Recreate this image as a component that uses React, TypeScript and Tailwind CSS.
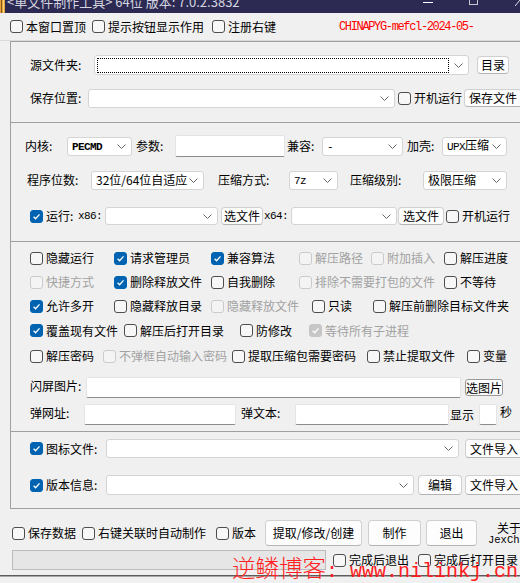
import React from "react";

type CheckProps = {
  label: React.ReactNode;
  on?: boolean;
  dis?: boolean;
  w?: string;
};

function Box({ on, dis }: { on?: boolean; dis?: boolean }) {
  const tone = on
    ? dis
      ? "border-[#c6c6c6] bg-[#c6c6c6]"
      : "border-[#0063b1] bg-[#0063b1]"
    : dis
      ? "border-[#cbcbcb] bg-[#f4f4f4]"
      : "border-[#4d4d4d] bg-[#f7f7f7]";
  return (
    <span
      className={`flex h-[13px] w-[13px] shrink-0 items-center justify-center rounded-[3px] border ${tone}`}
    >
      {on && (
        <svg width="9" height="9" viewBox="0 0 9 9">
          <path d="M1.6 4.7 L3.6 6.7 L7.5 2.4" fill="none" stroke="white" strokeWidth="1.3" />
        </svg>
      )}
    </span>
  );
}

function Check({ label, on, dis, w = "" }: CheckProps) {
  return (
    <div className={`flex shrink-0 items-center whitespace-nowrap ${w}`}>
      <Box on={on} dis={dis} />
      <span className={`ml-[3px] ${dis ? "text-[#a2a2a2]" : "text-black"}`}>{label}</span>
    </div>
  );
}

function Chevron() {
  return (
    <svg width="9" height="5" viewBox="0 0 9 5" className="shrink-0">
      <path d="M0.5 0.5 L4.5 4.5 L8.5 0.5" fill="none" stroke="#666" strokeWidth="1" />
    </svg>
  );
}

function Select({ w, h, children }: { w: string; h: string; children?: React.ReactNode }) {
  return (
    <div
      className={`flex shrink-0 items-center justify-between rounded-[3px] border border-[#d4d4d4] bg-white pl-[4px] pr-[5px] whitespace-nowrap ${w} ${h}`}
    >
      <span>{children}</span>
      <Chevron />
    </div>
  );
}

function Field({ w, h }: { w: string; h: string }) {
  return (
    <div
      className={`shrink-0 rounded-[2px] border border-[#e4e4e4] border-b-[#8c8c8c] bg-white ${w} ${h}`}
    />
  );
}

function Btn({ w, h, children }: { w: string; h: string; children: React.ReactNode }) {
  return (
    <div
      className={`flex shrink-0 items-center justify-center whitespace-nowrap rounded-[4px] border border-[#d0d0d0] border-b-[#b4b4b4] bg-[#fdfdfd] ${w} ${h}`}
    >
      {children}
    </div>
  );
}

const mono = "font-['Liberation_Mono',monospace] text-[11px] tracking-[-0.6px]";

export default function App() {
  return (
    <div className="relative h-[583px] w-[520px] overflow-hidden bg-[#f0f0f0] font-['Noto_Sans_CJK_SC','Noto_Sans',sans-serif] text-[12px] leading-[16px] text-black">
      {/* title bar, mostly cut off */}
      <div className="flex h-[13px] items-start overflow-hidden bg-[#2c2a52]">
        <svg width="5" height="13" viewBox="0 0 5 13" className="shrink-0">
          <rect x="0" y="0" width="5" height="13" fill="#e6a23a" />
          <rect x="1" y="0" width="1" height="13" fill="#8a5a1a" />
          <rect x="3" y="0" width="1" height="13" fill="#f7d77a" />
        </svg>
        <div className="w-[418px] shrink-0 pl-[2px]">
          <span className="block -translate-y-[6px] whitespace-nowrap text-[13px] leading-[16px] text-[#d6d6e0]">
            &lt;单文件制作工具&gt; 64位 版本: 7.0.2.3832
          </span>
        </div>
        <div className="mt-[2px] h-px w-[10px] shrink-0 bg-white" />
        <div className="w-[36px] shrink-0" />
        <div className="h-[5px] w-[9px] shrink-0 border-x border-b border-[#c8c8d0]" />
        <div className="w-[37px] shrink-0" />
        <svg width="5" height="6" viewBox="0 0 5 6" className="shrink-0">
          <path d="M0 6 L5 0" stroke="#e0e0e8" strokeWidth="1" />
        </svg>
      </div>

      {/* top options */}
      <div className="flex h-[27px] items-center pl-[10px]">
        <Check w="w-[82px]" label="本窗口置顶" />
        <Check w="w-[120px]" label="提示按钮显示作用" />
        <Check w="w-[127px]" label="注册右键" />
        <span className="font-['Liberation_Mono',monospace] text-[12px] tracking-[-1.35px] text-[#ff0000]">
          CHINAPYG-mefcl-2024-05-
        </span>
      </div>
      <div className="h-px bg-[#dadada]" />

      {/* main frame */}
      <div className="ml-[10px] w-[520px] border-y border-l border-[#a0a0a0]">
        {/* section 1 */}
        <div className="flex h-[80px] flex-col gap-[13px] pl-[19px] pt-[13px]">
          <div className="flex h-[20px] items-center">
            <span className="w-[64px] shrink-0">源文件夹:</span>
            <div className="flex h-[20px] w-[375px] shrink-0 items-center justify-between rounded-[3px] border border-[#d4d4d4] bg-white pr-[5px]">
              <div className="ml-[2px] h-[15px] w-[352px] border border-dotted border-black" />
              <Chevron />
            </div>
            <div className="ml-[8px]">
              <Btn w="w-[32px]" h="h-[18px]">目录</Btn>
            </div>
          </div>
          <div className="flex h-[20px] items-center">
            <span className="w-[58px] shrink-0">保存位置:</span>
            <Select w="w-[307px]" h="h-[19px]" />
            <div className="ml-[3px]">
              <Check w="w-[66px]" label="开机运行" />
            </div>
            <Btn w="w-[58px]" h="h-[18px]">保存文件</Btn>
          </div>
        </div>

        {/* section 2 */}
        <div className="h-[119px] border-t border-[#a0a0a0] pl-[14px] pt-[12px]">
          <div className="flex h-[22px] items-center">
            <span className="w-[42px] shrink-0">内核:</span>
            <Select w="w-[65px]" h="h-[19px]">
              <span className={`${mono} font-bold`}>PECMD</span>
            </Select>
            <span className="ml-[4px] w-[39px] shrink-0">参数:</span>
            <Field w="w-[110px]" h="h-[22px]" />
            <span className="ml-[2px] w-[35px] shrink-0">兼容:</span>
            <Select w="w-[81px]" h="h-[19px]">
              <span className={mono}>-</span>
            </Select>
            <span className="ml-[4px] w-[35px] shrink-0">加壳:</span>
            <Select w="w-[65px]" h="h-[19px]">
              <span className={mono}>UPX</span>压缩
            </Select>
          </div>
          <div className="mt-[13px] flex h-[20px] items-center pl-[2px]">
            <span className="w-[64px] shrink-0">程序位数:</span>
            <Select w="w-[113px]" h="h-[19px]">32位/64位自适应</Select>
            <span className="ml-[14px] w-[71px] shrink-0">压缩方式:</span>
            <Select w="w-[49px]" h="h-[19px]">
              <span className={mono}>7z</span>
            </Select>
            <span className="ml-[12px] w-[73px] shrink-0">压缩级别:</span>
            <Select w="w-[84px]" h="h-[19px]">极限压缩</Select>
          </div>
          <div className="mt-[17px] flex h-[18px] items-center pl-[5px]">
            <Check on w="w-[48px]" label="运行:" />
            <span className={`${mono} w-[27px] shrink-0`}>x86:</span>
            <Select w="w-[113px]" h="h-[18px]" />
            <div className="ml-[3px]">
              <Btn w="w-[42px]" h="h-[18px]">选文件</Btn>
            </div>
            <span className={`${mono} ml-[1px] w-[27px] shrink-0`}>x64:</span>
            <Select w="w-[106px]" h="h-[18px]" />
            <div className="ml-[1px]">
              <Btn w="w-[46px]" h="h-[18px]">选文件</Btn>
            </div>
            <div className="ml-[2px]">
              <Check label="开机运行" />
            </div>
          </div>
        </div>

        {/* section 3 */}
        <div className="h-[190px] border-t border-[#a0a0a0] pl-[19px] pt-[4px]">
          <div className="flex h-[24px] items-center">
            <Check w="w-[84px]" label="隐藏运行" />
            <Check on w="w-[97px]" label="请求管理员" />
            <Check on w="w-[88px]" label="兼容算法" />
            <Check dis w="w-[72px]" label="解压路径" />
            <Check dis w="w-[73px]" label="附加插入" />
            <Check label="解压进度" />
          </div>
          <div className="flex h-[24px] items-center">
            <Check dis w="w-[84px]" label="快捷方式" />
            <Check on w="w-[97px]" label="删除释放文件" />
            <Check w="w-[88px]" label="自我删除" />
            <Check dis w="w-[145px]" label="排除不需要打包的文件" />
            <Check label="不等待" />
          </div>
          <div className="flex h-[24px] items-center">
            <Check on w="w-[84px]" label="允许多开" />
            <Check w="w-[97px]" label="隐藏释放目录" />
            <Check dis w="w-[101px]" label="隐藏释放文件" />
            <Check w="w-[61px]" label="只读" />
            <Check label="解压前删除目标文件夹" />
          </div>
          <div className="flex h-[25px] items-center">
            <Check on w="w-[94px]" label="覆盖现有文件" />
            <Check w="w-[116px]" label="解压后打开目录" />
            <Check w="w-[69px]" label="防修改" />
            <Check on dis label="等待所有子进程" />
          </div>
          <div className="flex h-[26px] items-center">
            <Check w="w-[73px]" label="解压密码" />
            <Check dis w="w-[129px]" label="不弹框自动输入密码" />
            <Check w="w-[135px]" label="提取压缩包需要密码" />
            <Check w="w-[100px]" label="禁止提取文件" />
            <Check label="变量" />
          </div>
          <div className="mt-[8px] flex h-[21px] items-center">
            <span className="mb-[4px] w-[56px] shrink-0">闪屏图片:</span>
            <Field w="w-[375px]" h="h-[21px]" />
            <div className="ml-[4px]">
              <div className="flex h-[17px] w-[38px] items-center justify-center rounded-[3px] border border-[#9a9a9a] bg-[#fbfbfb]">
                选图片
              </div>
            </div>
          </div>
          <div className="mt-[6px] flex h-[21px] items-center">
            <span className="mb-[4px] w-[54px] shrink-0">弹网址:</span>
            <Field w="w-[152px]" h="h-[21px]" />
            <span className="mb-[4px] ml-[5px] w-[54px] shrink-0">弹文本:</span>
            <Field w="w-[154px]" h="h-[21px]" />
            <span className="ml-[1px] w-[29px] shrink-0">显示</span>
            <Field w="w-[18px]" h="h-[21px]" />
            <span className="mb-[6px] ml-[3px]">秒</span>
          </div>
        </div>

        {/* section 4 */}
        <div className="h-[77px] border-t border-[#a0a0a0] pl-[19px] pt-[7px]">
          <div className="flex h-[19px] items-center">
            <Check on w="w-[76px]" label="图标文件:" />
            <Select w="w-[353px]" h="h-[19px]" />
            <div className="ml-[6px]">
              <Btn w="w-[58px]" h="h-[19px]">文件导入</Btn>
            </div>
          </div>
          <div className="mt-[17px] flex h-[20px] items-center">
            <Check on w="w-[76px]" label="版本信息:" />
            <Select w="w-[308px]" h="h-[20px]" />
            <div className="ml-[4px]">
              <Btn w="w-[44px]" h="h-[20px]">编辑</Btn>
            </div>
            <div className="ml-[3px]">
              <Btn w="w-[58px]" h="h-[20px]">文件导入</Btn>
            </div>
          </div>
        </div>
      </div>

      {/* bottom controls */}
      <div className="mt-[11px] flex h-[26px] items-center pl-[12px]">
        <Check w="w-[70px]" label="保存数据" />
        <Check w="w-[134px]" label="右键关联时自动制作" />
        <Check w="w-[49px]" label="版本" />
        <Btn w="w-[97px]" h="h-[26px]">提取/修改/创建</Btn>
        <div className="ml-[6px]">
          <Btn w="w-[53px]" h="h-[26px]">制作</Btn>
        </div>
        <div className="ml-[5px]">
          <Btn w="w-[51px]" h="h-[26px]">退出</Btn>
        </div>
        <div className="ml-[11px] flex h-[26px] flex-col self-start whitespace-nowrap">
          <span className="pl-[9px] leading-[15px]">关于</span>
          <span className="font-['Liberation_Mono',monospace] text-[10.5px] leading-[11px]">JexChan</span>
        </div>
      </div>
      <div className="mt-[4px] flex h-[20px] items-center pl-[12px]">
        <div className="h-[20px] w-[314px] shrink-0 border border-[#bcbcbc] bg-[#e6e6e6]" />
        <div className="ml-[7px]">
          <Check w="w-[85px]" label="完成后退出" />
        </div>
        <Check label="完成后打开目录" />
      </div>
      <div className="mt-[5px] h-px bg-[#5c5c5c]" />
      <div className="h-px bg-[#a8a8a8]" />

      {/* watermark */}
      <div className="pointer-events-none absolute left-[232px] top-[553px] flex items-baseline whitespace-nowrap text-[#ff1f1f]">
        <span className="text-[23.5px] font-light leading-[28px]">逆鳞博客</span>
        <span className="font-['Liberation_Mono',monospace] text-[20px] leading-[28px]">: www.nilinkj.cn</span>
      </div>
    </div>
  );
}
